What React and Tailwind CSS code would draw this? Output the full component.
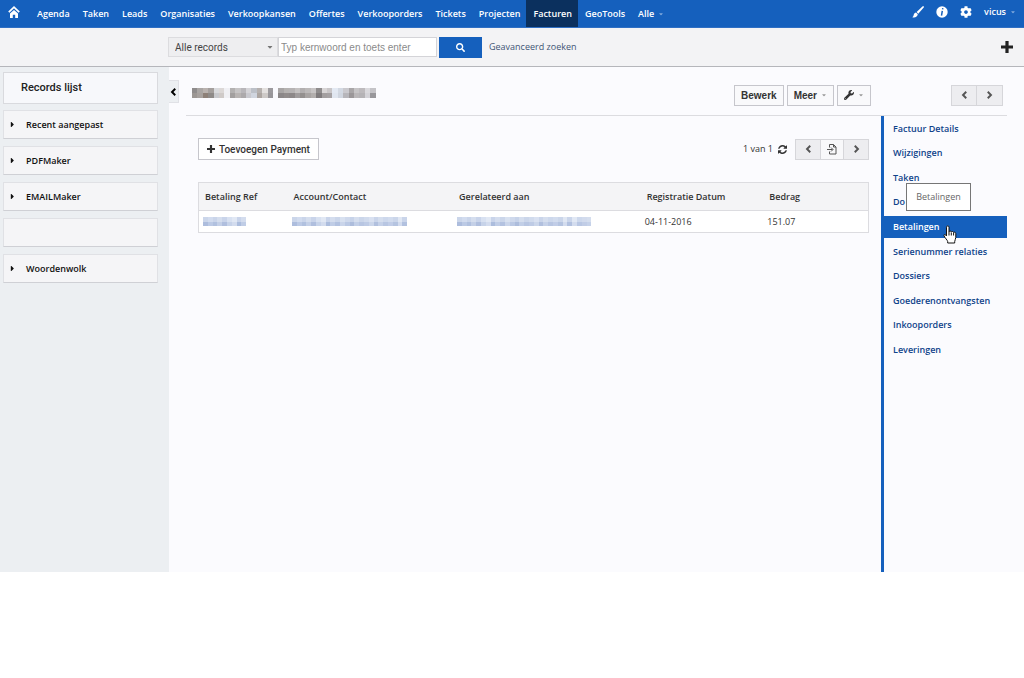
import React from "react";
import {
  FaCog,
  FaSearch,
  FaWrench,
  FaCaretDown,
  FaCaretRight,
} from "react-icons/fa";

const NAV = [
  "Agenda",
  "Taken",
  "Leads",
  "Organisaties",
  "Verkoopkansen",
  "Offertes",
  "Verkooporders",
  "Tickets",
  "Projecten",
  "Facturen",
  "GeoTools",
];

const RELATED = [
  "Factuur Details",
  "Wijzigingen",
  "Taken",
  "Documenten",
  "Betalingen",
  "Serienummer relaties",
  "Dossiers",
  "Goederenontvangsten",
  "Inkooporders",
  "Leveringen",
];

const WIDGETS = ["Recent aangepast", "PDFMaker", "EMAILMaker", "", "Woordenwolk"];

const TITLE_ROWS = [
  "8f8c8c a9a5a3 b9b2af a49f9d d9dadd dcd8d7 f0f0f4 b3b1b1 c6c4c5 b8b6ba d5d4d8 bcc0c8 b5b0ae e3e0df 9c9a9e fafafe a8a5a5 b5b2b1 b6b3b4 c4c1c1 b2afb0 bcb9b9 c7c4c5 8f8c8d d8d5d6 c9c6c8 e3e9f3 d3d9e3 cac9ce a9a6a8 c6c4c6 bdbabd dad9dd c4c3c7",
  "9c9794 a7a19e 8d8078 8e8a88 c8c9cd cfcac8 f0f0f4 a29f9f b8b4b3 aca9ab c9c9cf d0d5df aca5a1 cdc9c7 98969a fafafe 8b8788 918c8c 8d8889 a09c9d 94908f a8a4a3 b2aead 7f7b7d a39fa0 a6a2a4 e0e6f0 d0d6e0 b7b6bb 9b9799 bab7b9 b5b3b6 d4d3d8 98979b",
];

const LINK_ROWS = [
  "cbd6ea d2dcef cad5ea d5deee c9d4ea d8e1f1 e1e8f4 c9d4ea d4ddee cbd6ea d8e1f0 cfd9ec c7d3e9 d5deee cbd6ea d1dbed d9e1f1 cad5ea d5deee cdd8ec d2dcee cbd6ea e0e7f3 cad5ea e1e8f4 cdd8ec d2dbed d5deee cdd8ec dee6f3",
  "adbddd bccae5 b1c1df c4d0e7 b0bfde c7d3e9 d3dcee acbddd c0cde6 b3c2e0 cad5ea bbc9e4 adbddc c2cfe7 b8c6e2 becbe5 cbd6ea b1c0de c5d1e8 b8c6e2 c1cde7 b5c4e0 d3dcee b2c1df d3dcee b9c7e3 c1cde6 c6d2e9 b8c7e2 d3dcee",
];

function Mosaic({ rows, cells, cell, height }) {
  const half = height / 2;
  return (
    <svg
      width={cells * cell}
      height={height}
      viewBox={`0 0 ${cells * cell} ${height}`}
      className="block"
      role="img"
      aria-label="Afgeschermd"
      shapeRendering="crispEdges"
    >
      {rows.map((row, r) =>
        row
          .split(" ")
          .slice(0, cells)
          .map((c, i) => (
            <rect key={`${r}-${i}`} x={i * cell} y={r * half} width={cell} height={half} fill={`#${c}`} />
          ))
      )}
    </svg>
  );
}

function HomeIcon() {
  return (
    <svg width="12" height="12" viewBox="0 0 12 12" fill="none" aria-hidden="true">
      <path d="M.8 6.200 6 1.200 11.200 6.200" stroke="white" strokeWidth="1.700" />
      <path d="M2 7.600 6 4.100 10 7.600V12H7.200V8.800H4.800V12H2z" fill="white" />
    </svg>
  );
}

function BrushIcon() {
  return (
    <svg width="12" height="12" viewBox="0 0 12 12" fill="white" aria-hidden="true">
      <path d="M11.700.3c.4.400.3.900 0 1.300L6.300 7.700 4.600 6.100 10.400.5c.4-.4.900-.5 1.300-.2z" />
      <path d="M4 6.600 5.800 8.300C5.600 10.500 3.200 12 .3 11.200 1.800 10.500 1.400 9.200 2 8c.4-.8 1.100-1.300 2-1.400z" />
    </svg>
  );
}

function InfoIcon() {
  return (
    <svg width="12" height="12" viewBox="0 0 12 12" aria-hidden="true">
      <circle cx="6" cy="6" r="5.700" fill="white" />
      <path d="M6.800 2.200 6.600 3.400M6.300 4.800 5.500 9.600" stroke="#1560bd" strokeWidth="1.500" />
    </svg>
  );
}

function PlusIcon({ size }) {
  return (
    <svg width={size} height={size} viewBox="0 0 12 12" fill="currentColor" aria-hidden="true">
      <path d="M4.400 0h3.200v4.400H12v3.200H7.600V12H4.400V7.600H0V4.400h4.400z" />
    </svg>
  );
}

function Chevron({ right }) {
  return (
    <svg width="7" height="8" viewBox="0 0 8 9" fill="none" stroke="currentColor" strokeWidth="2.200" aria-hidden="true">
      <path d={right ? "M2 .8 5.700 4.500 2 8.200" : "M6 .8 2.300 4.500 6 8.200"} />
    </svg>
  );
}

function RefreshIcon() {
  return (
    <svg width="9" height="9" viewBox="0 0 1536 1536" fill="currentColor" aria-hidden="true">
      <path d="M1511 928q0 5-1 7-64 268-268 434.500T764 1536q-146 0-282.500-55T238 1324l-129 129q-19 19-45 19t-45-19-19-45V960q0-26 19-45t45-19h448q26 0 45 19t19 45-19 45l-137 137q71 66 161 102t187 36q134 0 250-65t186-179q11-17 53-117 8-23 30-23h192q13 0 22.500 9.500t9.500 22.500zm25-800v448q0 26-19 45t-45 19h-448q-26 0-45-19t-19-45 19-45l138-138Q969 256 768 256q-134 0-250 65T332 500q-11 17-53 117-8 23-30 23H50q-13 0-22.500-9.500T18 608v-7q65-268 270-434.500T768 0q146 0 284 55.500T1297 212l130-129q19-19 45-19t45 19 19 45z" />
    </svg>
  );
}

function PageJumpIcon() {
  return (
    <svg width="10" height="11" viewBox="0 0 10 11" fill="none" stroke="#555" aria-hidden="true">
      <path d="M2.500 3.500V.5h4l2.500 2.500v7H2.500V7.500M6.500.5V3H9M0 5.500h5.500M4 3.500l2 2-2 2" />
    </svg>
  );
}

function HandCursor() {
  return (
    <svg width="14" height="19" viewBox="0 0 14 19" aria-hidden="true">
      <path
        d="M3.500 11V2.200C3.500.4 6 .4 6 2.200v4.600c.3-1.200 2.200-1 2.300.3.400-1 2.100-.8 2.300.5.500-.8 2.200-.5 2.200 1v3.800c0 1.800-1.100 2.600-1.100 4.200v1.400H4.700v-1.400C4.700 15.300 1.500 12.700 1 10.600c-.3-1.400 1.200-1.700 2.500.4z"
        fill="white"
        stroke="#111"
      />
      <path d="M6 6.800v3.700M8.300 7.500v3M10.600 8v2.500" stroke="#111" fill="none" />
    </svg>
  );
}

const greyButton =
  "flex items-center justify-center border";
const darkEdge = "border-[#c6c6cc] text-[#333]";
const paleEdge = "border-[#d6d6da] bg-[#ededf0] text-[#555]";

export default function App() {
  return (
    <div className="min-h-screen bg-white font-['Open_Sans','Noto_Sans',sans-serif] text-[9px] text-[#333]">
      <nav className="flex h-7 items-stretch border-b border-[#2f6fc4] bg-[#1560bd] font-semibold text-white">
        <a href="#home" aria-label="Home" className="-mt-1 flex w-[30px] items-center pl-2">
          <HomeIcon />
        </a>
        {NAV.map((item) => (
          <a
            key={item}
            href={`#${item}`}
            className={`flex items-center pr-[6px] pl-[7px] ${item === "Facturen" ? "bg-[#0b305e]" : ""}`}
          >
            {item}
          </a>
        ))}
        <a href="#alle" className="flex items-center gap-1 px-[7px]">
          Alle <FaCaretDown className="size-[6px] text-[#7fa8dc]" />
        </a>
        <div className="ml-auto flex items-center gap-3 pr-2 pb-1">
          <button aria-label="Thema">
            <BrushIcon />
          </button>
          <button aria-label="Info">
            <InfoIcon />
          </button>
          <button aria-label="Instellingen">
            <FaCog className="size-3" />
          </button>
          <button className="flex items-center gap-1 font-semibold">
            vicus <FaCaretDown className="size-[6px] text-[#7fa8dc]" />
          </button>
        </div>
      </nav>

      <form
        className="flex h-[39px] items-center border-b border-[#b5b6bb] bg-[#f3f3f5] pr-[11px] pl-[168px]"
        onSubmit={(e) => e.preventDefault()}
      >
        <div className="relative">
          <select
            aria-label="Module"
            className="block h-5 w-[110px] appearance-none border border-[#dcdcdf] bg-[#eeeef0] pl-[6px] font-['Roboto',sans-serif] text-[10px] text-[#444]"
          >
            <option>Alle records</option>
          </select>
          <FaCaretDown className="pointer-events-none absolute top-[6px] right-1 size-2 text-[#777]" />
        </div>
        <input
          type="text"
          aria-label="Zoeken"
          placeholder="Typ kernwoord en toets enter"
          className="h-5 w-[159px] border border-[#d4d4d8] bg-white px-[2px] font-['Liberation_Sans',sans-serif] text-[10px] placeholder:text-[#8a8a8a]"
        />
        <button
          aria-label="Zoek"
          className="ml-[2px] flex h-[21px] w-[43px] items-center justify-center bg-[#1560bd] text-white"
        >
          <FaSearch className="size-[9px]" />
        </button>
        <a href="#geavanceerd" className="ml-[7px] text-[#3f5575]">
          Geavanceerd zoeken
        </a>
        <button type="button" aria-label="Toevoegen" className="ml-auto text-[#222]">
          <PlusIcon size={12} />
        </button>
      </form>

      <div className="flex min-h-[505px]">
        <aside className="w-[169px] shrink-0 bg-[#eceff2] pt-[5px] pr-[11px] pl-[3px] font-bold">
          <a
            href="#lijst"
            className="flex h-8 items-center border border-[#d9dade] bg-[#f7f8fb] pl-[17px] font-['Roboto',sans-serif] text-[11px] font-medium text-[#222]"
          >
            Records lijst
          </a>
          <div className="mt-[6px] flex flex-col gap-[7px]">
            {WIDGETS.map((w, i) => (
              <button
                key={i}
                aria-label={w || "Widget"}
                className="flex h-[29px] items-center border border-[#e0e1e5] border-b-[#cfd0d5] bg-[#f5f5f7] pl-1 text-left font-semibold text-[#111]"
              >
                {w && <FaCaretRight className="mr-[9px] size-[9px]" />}
                {w}
              </button>
            ))}
          </div>
        </aside>

        <main className="flex min-w-0 flex-1 bg-[#fbfbfe]">
          <button
            aria-label="Zijbalk verbergen"
            className="mt-[13px] flex h-[23px] w-[10px] shrink-0 items-center justify-center border border-l-0 border-[#e0e1e6] bg-[#eceff2] text-black"
          >
            <Chevron />
          </button>
          <div className="mr-[17px] ml-[7px] flex min-w-0 flex-1 flex-col">
            <header className="flex h-[49px] items-center border-b border-[#dcdce0] pr-1 font-['Liberation_Sans',sans-serif] text-[10px] font-bold">
              <h1 className="mt-1 ml-[6px]">
                <Mosaic rows={TITLE_ROWS} cells={34} cell={5.4} height={10} />
              </h1>
              <div className="mt-2 ml-auto flex h-[21px] items-stretch gap-[3px]">
                <button className={`${greyButton} ${darkEdge} bg-[#f9f9fb] px-[6px]`}>Bewerk</button>
                <button className={`${greyButton} ${darkEdge} gap-1 bg-[#f9f9fb] px-[6px]`}>
                  Meer <FaCaretDown className="size-[6px] text-[#999]" />
                </button>
                <button aria-label="Extra" className={`${greyButton} ${darkEdge} gap-1 bg-[#f9f9fb] px-[6px]`}>
                  <FaWrench className="size-[10px]" />
                  <FaCaretDown className="size-[6px] text-[#999]" />
                </button>
              </div>
              <div className="mt-2 ml-20 flex h-[21px]">
                <button aria-label="Vorige" className={`${greyButton} ${paleEdge} w-[26px]`}>
                  <Chevron />
                </button>
                <button aria-label="Volgende" className={`${greyButton} ${paleEdge} w-[26px] border-l-0`}>
                  <Chevron right />
                </button>
              </div>
            </header>

            <div className="flex flex-1">
              <section className="min-w-0 flex-1 pt-[22px] pr-3 pl-3">
                <div className="flex h-[22px] items-center justify-between">
                  <button
                    className={`${greyButton} ${darkEdge} h-[22px] gap-1 bg-white px-2 font-['Roboto',sans-serif] text-[10px] font-medium`}
                  >
                    <PlusIcon size={8} /> Toevoegen Payment
                  </button>
                  <div className="flex items-center">
                    <span>1 van 1</span>
                    <button aria-label="Vernieuwen" className="mr-2 ml-[5px]">
                      <RefreshIcon />
                    </button>
                    <button aria-label="Vorige pagina" className={`${greyButton} ${paleEdge} h-[21px] w-[26px]`}>
                      <Chevron />
                    </button>
                    <button
                      aria-label="Ga naar pagina"
                      className={`${greyButton} h-[21px] w-[22px] border-x-0 border-[#d6d6da] bg-[#f8f8fa]`}
                    >
                      <PageJumpIcon />
                    </button>
                    <button aria-label="Volgende pagina" className={`${greyButton} ${paleEdge} h-[21px] w-[26px]`}>
                      <Chevron right />
                    </button>
                  </div>
                </div>

                <table className="mt-[22px] w-full table-fixed border-collapse border border-[#dcdce0] text-left">
                  <thead className="bg-[#f4f4f6]">
                    <tr className="h-7 border-b border-[#dcdce0]">
                      <th className="w-[13%] pl-[6px] font-semibold">Betaling Ref</th>
                      <th className="w-[25%] pl-2 font-semibold">Account/Contact</th>
                      <th className="w-[28%] pl-[6px] font-semibold">Gerelateerd aan</th>
                      <th className="w-[18%] pl-[6px] font-semibold">Registratie Datum</th>
                      <th className="w-[16%] pl-2 font-semibold">Bedrag</th>
                    </tr>
                  </thead>
                  <tbody className="bg-white">
                    <tr className="h-[22px]">
                      <td className="pl-1">
                        <Mosaic rows={LINK_ROWS} cells={9} cell={4.8} height={9} />
                      </td>
                      <td className="pl-[6px]">
                        <Mosaic rows={LINK_ROWS} cells={24} cell={4.8} height={9} />
                      </td>
                      <td className="pl-1">
                        <Mosaic rows={LINK_ROWS} cells={28} cell={4.8} height={9} />
                      </td>
                      <td className="pl-1">04-11-2016</td>
                      <td className="pl-[6px]">151.07</td>
                    </tr>
                  </tbody>
                </table>
              </section>

              <aside className="w-[126px] shrink-0 border-l-[3px] border-[#1560bd]">
                <ul className="grid h-[246px] grid-rows-10 font-semibold text-[#0f438a]">
                  {RELATED.map((item) => (
                    <li key={item} className="relative flex items-center">
                      <a
                        href={`#${item}`}
                        className={`flex h-[22px] flex-1 items-center pl-[9px] ${
                          item === "Betalingen" ? "bg-[#1560bd] text-white" : ""
                        }`}
                      >
                        {item === "Documenten" ? "Do" : item}
                      </a>
                      {item === "Betalingen" && (
                        <>
                          <span
                            role="tooltip"
                            className="absolute bottom-7 left-[22px] z-10 flex h-7 w-[65px] items-center justify-center border border-[#767676] bg-white font-normal text-[#666]"
                          >
                            Betalingen
                          </span>
                          <span className="absolute top-[11px] left-[59px] z-10">
                            <HandCursor />
                          </span>
                        </>
                      )}
                    </li>
                  ))}
                </ul>
              </aside>
            </div>
          </div>
        </main>
      </div>
    </div>
  );
}
